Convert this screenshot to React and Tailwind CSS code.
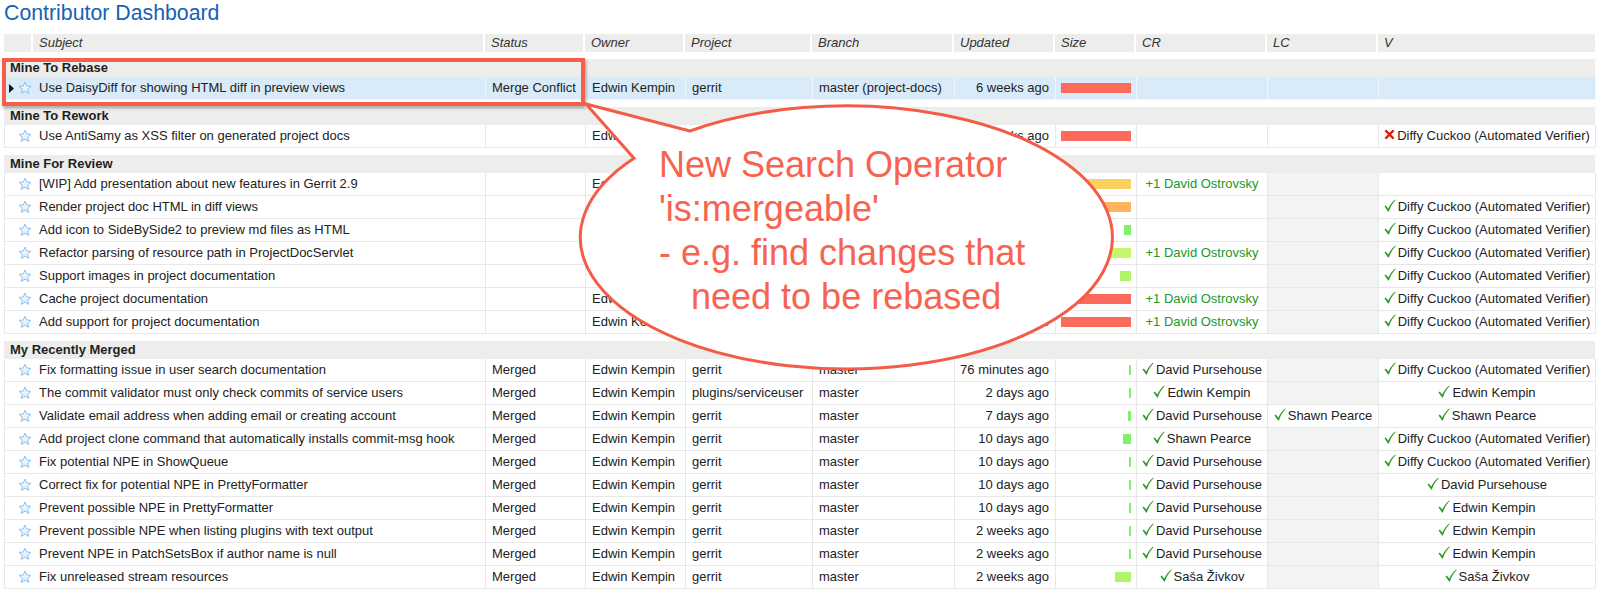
import React from "react";

const GRID =
  "grid grid-cols-[29px_452px_100px_100px_127px_142px_101px_81px_131px_111px_217px] w-[1591px]";

const RED = "#fb6a5b";
const GRN = "#80ef6a";

const HEAD = ["", "Subject", "Status", "Owner", "Project", "Branch", "Updated", "Size", "CR", "LC", "V"];

const P = (n) => ({ t: "p", n });
const C = (n) => ({ t: "c", n });
const X = (n) => ({ t: "x", n });
const DIFFY = "Diffy Cuckoo (Automated Verifier)";

const SECTIONS = [
  {
    title: "Mine To Rebase",
    rows: [
      {
        subject: "Use DaisyDiff for showing HTML diff in preview views",
        status: "Merge Conflict",
        owner: "Edwin Kempin",
        project: "gerrit",
        branch: "master (project-docs)",
        updated: "6 weeks ago",
        size: [70, RED],
        selected: true,
      },
    ],
  },
  {
    title: "Mine To Rework",
    rows: [
      {
        subject: "Use AntiSamy as XSS filter on generated project docs",
        status: "",
        owner: "Edwin Kempin",
        project: "gerrit",
        branch: "master (project-docs)",
        updated: "6 weeks ago",
        size: [70, RED],
        v: X(DIFFY),
      },
    ],
  },
  {
    title: "Mine For Review",
    rows: [
      { subject: "[WIP] Add presentation about new features in Gerrit 2.9", owner: "Edwin Kempin", project: "gerrit", branch: "master", updated: "5 weeks ago", size: [62, "#fed25f"], cr: P("+1 David Ostrovsky"), lcGray: true },
      { subject: "Render project doc HTML in diff views", owner: "Edwin Kempin", project: "gerrit", branch: "master (project-docs)", updated: "6 weeks ago", size: [52, "#ffb25c"], lcGray: true, v: C(DIFFY) },
      { subject: "Add icon to SideBySide2 to preview md files as HTML", owner: "Edwin Kempin", project: "gerrit", branch: "master (project-docs)", updated: "6 weeks ago", size: [7, "#80f06a"], lcGray: true, v: C(DIFFY) },
      { subject: "Refactor parsing of resource path in ProjectDocServlet", owner: "Edwin Kempin", project: "gerrit", branch: "master (project-docs)", updated: "6 weeks ago", size: [20, "#c6f66a"], cr: P("+1 David Ostrovsky"), lcGray: true, v: C(DIFFY) },
      { subject: "Support images in project documentation", owner: "Edwin Kempin", project: "gerrit", branch: "master (project-docs)", updated: "6 weeks ago", size: [11, "#aef56c"], lcGray: true, v: C(DIFFY) },
      { subject: "Cache project documentation", owner: "Edwin Kempin", project: "gerrit", branch: "master (project-docs)", updated: "6 weeks ago", size: [70, RED], cr: P("+1 David Ostrovsky"), lcGray: true, v: C(DIFFY) },
      { subject: "Add support for project documentation", owner: "Edwin Kempin", project: "gerrit", branch: "master (project-docs)", updated: "6 weeks ago", size: [70, RED], cr: P("+1 David Ostrovsky"), lcGray: true, v: C(DIFFY) },
    ],
  },
  {
    title: "My Recently Merged",
    rows: [
      { subject: "Fix formatting issue in user search documentation", status: "Merged", project: "gerrit", updated: "76 minutes ago", size: [2, GRN], cr: C("David Pursehouse"), lcGray: true, v: C(DIFFY) },
      { subject: "The commit validator must only check commits of service users", status: "Merged", project: "plugins/serviceuser", updated: "2 days ago", size: [2, GRN], cr: C("Edwin Kempin"), lcGray: true, v: C("Edwin Kempin") },
      { subject: "Validate email address when adding email or creating account", status: "Merged", project: "gerrit", updated: "7 days ago", size: [3, GRN], cr: C("David Pursehouse"), lc: C("Shawn Pearce"), v: C("Shawn Pearce") },
      { subject: "Add project clone command that automatically installs commit-msg hook", status: "Merged", project: "gerrit", updated: "10 days ago", size: [8, GRN], cr: C("Shawn Pearce"), lcGray: true, v: C(DIFFY) },
      { subject: "Fix potential NPE in ShowQueue", status: "Merged", project: "gerrit", updated: "10 days ago", size: [2, GRN], cr: C("David Pursehouse"), lcGray: true, v: C(DIFFY) },
      { subject: "Correct fix for potential NPE in PrettyFormatter", status: "Merged", project: "gerrit", updated: "10 days ago", size: [2, GRN], cr: C("David Pursehouse"), lcGray: true, v: C("David Pursehouse") },
      { subject: "Prevent possible NPE in PrettyFormatter", status: "Merged", project: "gerrit", updated: "10 days ago", size: [2, GRN], cr: C("David Pursehouse"), lcGray: true, v: C("Edwin Kempin") },
      { subject: "Prevent possible NPE when listing plugins with text output", status: "Merged", project: "gerrit", updated: "2 weeks ago", size: [2, GRN], cr: C("David Pursehouse"), lcGray: true, v: C("Edwin Kempin") },
      { subject: "Prevent NPE in PatchSetsBox if author name is null", status: "Merged", project: "gerrit", updated: "2 weeks ago", size: [2, GRN], cr: C("David Pursehouse"), lcGray: true, v: C("Edwin Kempin") },
      { subject: "Fix unreleased stream resources", status: "Merged", project: "gerrit", updated: "2 weeks ago", size: [16, "#aef56c"], cr: C("Saša Živkov"), lcGray: true, v: C("Saša Živkov") },
    ].map((r) => ({ owner: "Edwin Kempin", branch: "master", ...r })),
  },
];

function Star() {
  return (
    <svg width="14" height="14" viewBox="0 0 14 14" className="block">
      <defs>
        <linearGradient id="stargrad" x1="0" y1="0" x2="0" y2="1">
          <stop offset="0" stopColor="#ffffff" />
          <stop offset="1" stopColor="#d6ebff" />
        </linearGradient>
      </defs>
      <path
        d="M7 1 L8.65 5.03 L12.99 5.35 L9.66 8.17 L10.7 12.4 L7 10.1 L3.3 12.4 L4.34 8.17 L1.01 5.35 L5.35 5.03 Z"
        fill="url(#stargrad)"
        stroke="#8fc2ec"
        strokeWidth="1"
        strokeLinejoin="round"
      />
    </svg>
  );
}

function Arrow() {
  return (
    <svg width="5" height="9" viewBox="0 0 5 9" className="block">
      <path d="M0 0 L5 4.5 L0 9 Z" fill="#111" />
    </svg>
  );
}

function Check() {
  return (
    <svg width="12" height="13" viewBox="0 0 12 13" className="inline-block align-[-1px] mr-[2px]">
      <path
        d="M0.5 7.4 L1.8 6.4 L4.2 9.5 C6 5.8 8.4 2.6 11.4 0.4 L11.8 1 C9 3.5 6.7 7.4 4.9 12.4 L4.1 12.4 Z"
        fill="#2f9c2a"
      />
    </svg>
  );
}

function Cross() {
  return (
    <svg width="11" height="11" viewBox="0 0 11 11" className="inline-block align-[0px] mr-[2px]">
      <path
        d="M0.6 2.2 L2.2 0.6 L5.5 3.8 L8.8 0.6 L10.4 2.2 L7.1 5.5 L10.4 8.8 L8.8 10.4 L5.5 7.2 L2.2 10.4 L0.6 8.8 L3.9 5.5 Z"
        fill="#d7200d"
      />
    </svg>
  );
}

function Label({ v }) {
  if (!v) return null;
  if (v.t === "p") return <span className="text-[#20982a]">{v.n}</span>;
  return (
    <span className="whitespace-nowrap">
      {v.t === "c" ? <Check /> : <Cross />}
      {v.n}
    </span>
  );
}

function Row({ r }) {
  const sel = r.selected;
  const bd = sel ? "border-[#eef5fc]" : "border-[#e8e8e8]";
  return (
    <div
      className={`${GRID} h-[23px] border-b border-l ${bd} ${
        sel ? "bg-[#d9eaf8]" : "bg-white"
      } text-[13px] text-[#222] leading-[22px]`}
    >
      <div className="flex items-center justify-between pl-[4px] pr-[2px]">
        {sel ? <Arrow /> : <span />}
        <Star />
      </div>
      <div className={`pl-[5px] whitespace-nowrap overflow-hidden border-r ${bd}`}>{r.subject}</div>
      <div className={`pl-[6px] whitespace-nowrap overflow-hidden border-r ${bd}`}>{r.status}</div>
      <div className={`pl-[6px] whitespace-nowrap overflow-hidden border-r ${bd}`}>{r.owner}</div>
      <div className={`pl-[6px] whitespace-nowrap overflow-hidden border-r ${bd}`}>{r.project}</div>
      <div className={`pl-[6px] whitespace-nowrap overflow-hidden border-r ${bd}`}>{r.branch}</div>
      <div className={`pr-[6px] text-right whitespace-nowrap overflow-hidden border-r ${bd}`}>{r.updated}</div>
      <div className={`flex items-center justify-end pr-[5px] border-r ${bd}`}>
        {r.size ? (
          <div className="h-[10px]" style={{ width: r.size[0], background: r.size[1] }} />
        ) : null}
      </div>
      <div className={`text-center whitespace-nowrap overflow-hidden border-r ${bd}`}>
        <Label v={r.cr} />
      </div>
      <div
        className={`text-center whitespace-nowrap overflow-hidden border-r ${bd} ${
          r.lcGray && !sel ? "bg-[#f2f3f3]" : ""
        }`}
      >
        <Label v={r.lc} />
      </div>
      <div className={`text-center whitespace-nowrap overflow-hidden border-r ${bd}`}>
        <Label v={r.v} />
      </div>
    </div>
  );
}

function Section({ s }) {
  return (
    <div className="flex flex-col">
      <div className="h-[7px]" />
      <div className="w-[1591px] h-[18px] bg-[#ededeb] font-bold text-[13px] leading-[18px] pl-[6px] text-[#1f1f1f]">
        {s.title}
      </div>
      {s.rows.map((r, i) => (
        <Row key={i} r={r} />
      ))}
    </div>
  );
}

export default function App() {
  return (
    <div className="relative w-[1599px] h-[592px] overflow-hidden bg-white font-['Liberation_Sans',Arial,sans-serif]">
      <div className="h-[34px] pl-[4px] pt-[1px] text-[21.3px] leading-[25px] text-[#1562b5]">
        Contributor Dashboard
      </div>
      <div className="pl-[4px] flex flex-col">
        <div className={`${GRID} h-[18px] text-[13px] italic text-[#333] leading-[18px]`}>
          {HEAD.map((h, i) => (
            <div key={i} className={`bg-[#ededeb] pl-[6px] ${i < HEAD.length - 1 ? "border-r-2 border-white" : ""}`}>
              {h}
            </div>
          ))}
        </div>
        {SECTIONS.map((s, i) => (
          <Section key={i} s={s} />
        ))}
        <div className="w-[1591px] pt-[1px] text-right text-[12px] leading-[14px] text-[#8a8a8a] whitespace-nowrap">
          Press '?' to view keyboard shortcuts | Powered by{" "}
          <span className="text-[#2a5db0]">Gerrit Code Review</span> (2.9-rc0-437-g0c3da0f) |{" "}
          <span className="text-[#2a5db0]">Report Bug</span>
        </div>
      </div>

      {/* highlight box */}
      <div className="absolute left-[2px] top-[58px] w-[583px] h-[48px] border-[4px] border-[#f35f4a] shadow-[1px_2px_3px_rgba(0,0,0,0.35)] pointer-events-none" />

      {/* callout bubble */}
      <svg className="absolute left-0 top-0 pointer-events-none" width="1599" height="592">
        <path
          d="M690 131 L586 104 L634 158.2 A266 131.5 0 1 0 690 131 Z"
          fill="#ffffff"
          stroke="#f45c48"
          strokeWidth="3"
          strokeLinejoin="miter"
        />
      </svg>
      <div className="absolute left-[659px] top-[143px] text-[36px] leading-[44px] text-[#f7634f] whitespace-nowrap pointer-events-none">
        <div>New Search Operator</div>
        <div>'is:mergeable'</div>
        <div>- e.g. find changes that</div>
        <div className="pl-[32px]">need to be rebased</div>
      </div>
    </div>
  );
}
